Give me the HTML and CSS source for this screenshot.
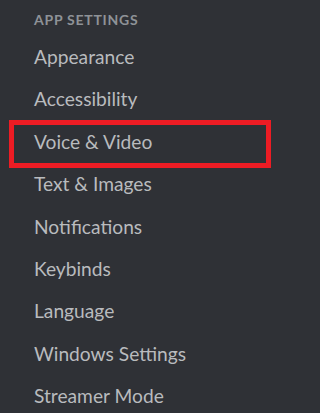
FILE: index.html
```html
<!DOCTYPE html>
<html lang="en">
<head>
<meta charset="utf-8">
<title>App Settings</title>
<link rel="stylesheet" href="styles.css">
</head>
<body>
<nav class="sidebar">
  <div class="header">App Settings</div>
  <div class="item">Appearance</div>
  <div class="item">Accessibility</div>
  <div class="item item-highlight">Voice &amp; Video</div>
  <div class="item">Text &amp; Images</div>
  <div class="item">Notifications</div>
  <div class="item">Keybinds</div>
  <div class="item">Language</div>
  <div class="item">Windows Settings</div>
  <div class="item">Streamer Mode</div>
</nav>
</body>
</html>
```
FILE: styles.css
```css
html, body {
  margin: 0;
  padding: 0;
  background: #2f3136;
  height: 100%;
  overflow: hidden;
}
.sidebar {
  width: 276px;
  font-family: Lato, "Open Sans", sans-serif;
  padding-top: 10.6px;
}
.header {
  font-size: 14px;
  line-height: 18px;
  font-weight: 700;
  text-transform: uppercase;
  letter-spacing: 0.75px;
  color: #8e9297;
  padding-left: 34px;
  margin-bottom: 6.7px;
}
.item {
  position: relative;
  font-size: 19.2px;
  line-height: 26px;
  padding: 8.3px 0 8.2px 34px;
  color: #b9bbbe;
}
.item-highlight::after {
  content: "";
  position: absolute;
  left: 9px;
  right: 5px;
  top: 0;
  bottom: -5px;
  border: 5px solid #ed1c24;
}
```
